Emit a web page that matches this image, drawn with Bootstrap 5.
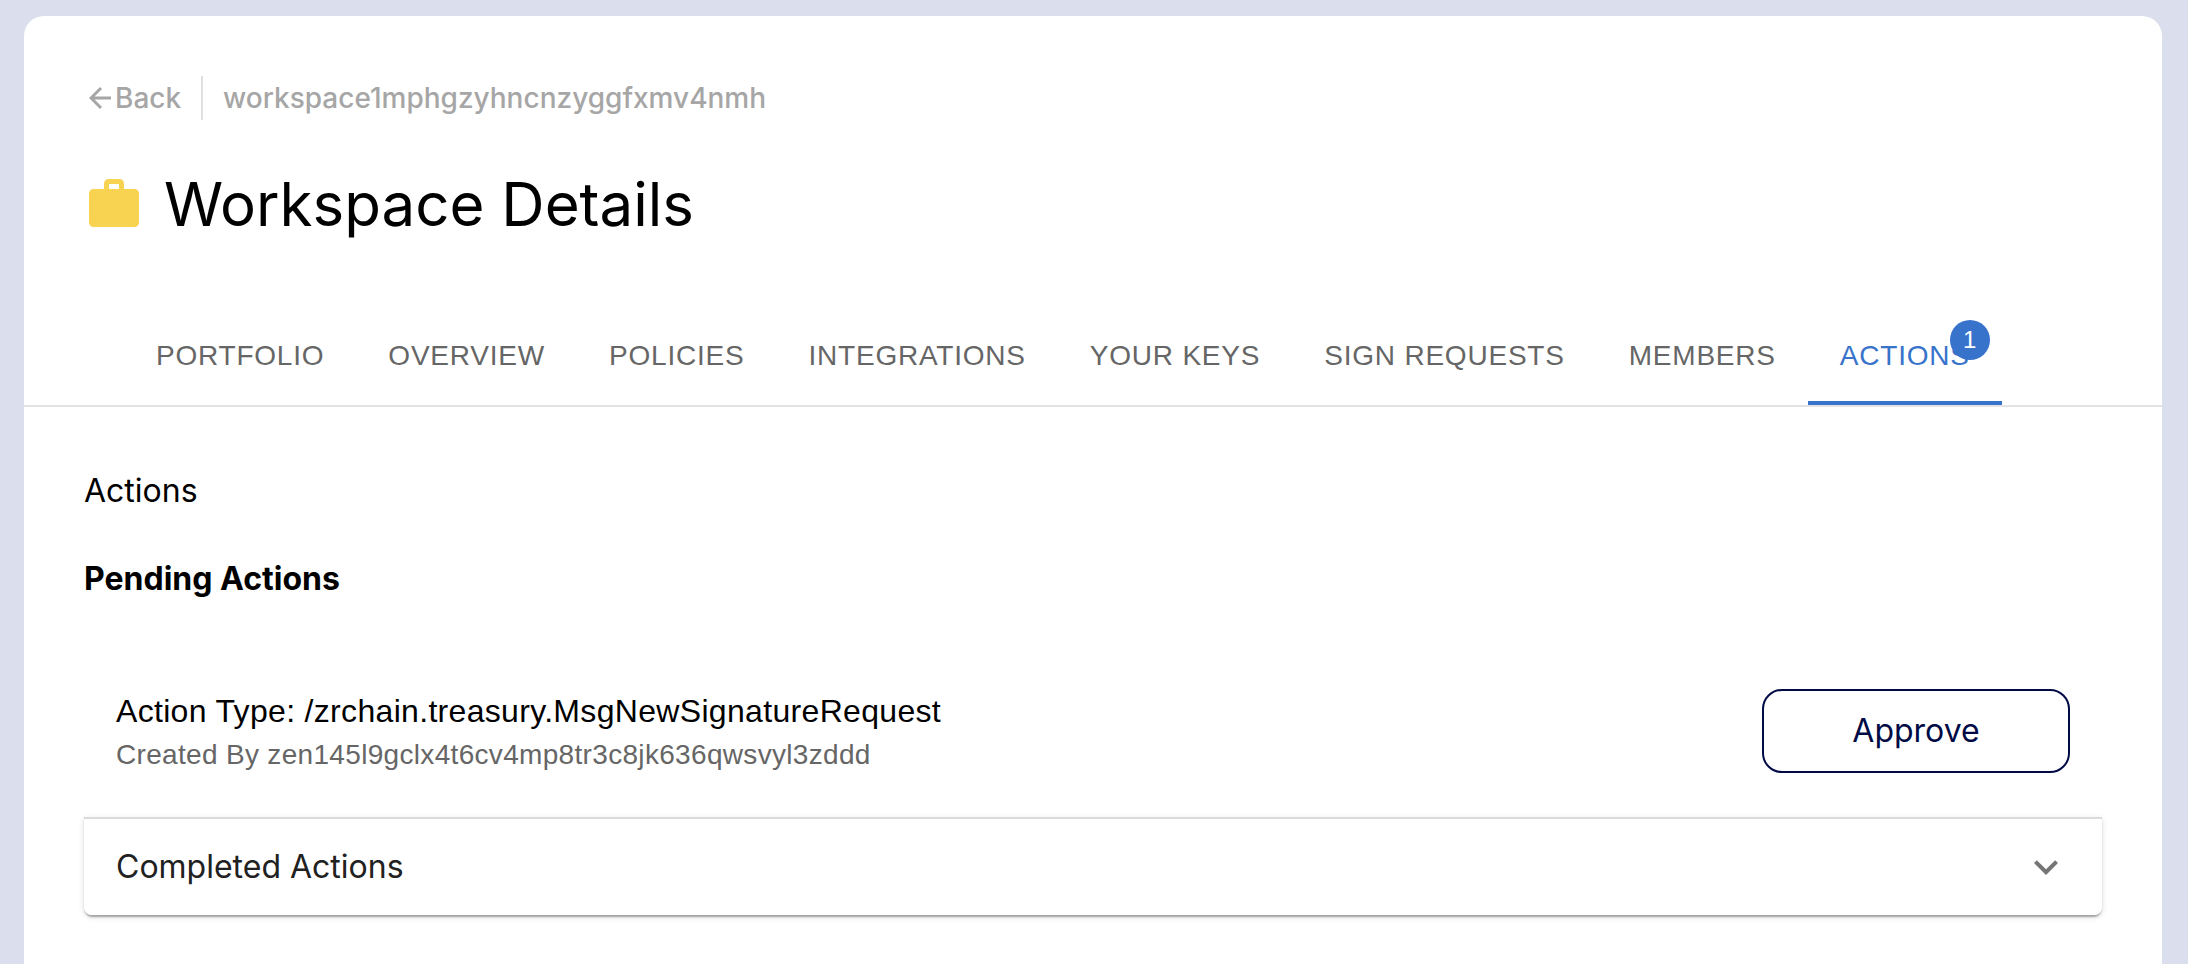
<!DOCTYPE html>
<html lang="en">
<head>
<meta charset="utf-8">
<meta name="viewport" content="width=device-width, initial-scale=1">
<title>Workspace Details</title>
<link href="https://cdn.jsdelivr.net/npm/bootstrap@5.3.0/dist/css/bootstrap.min.css" rel="stylesheet">
<style>
  body { background: #dbdeec; color: #000; font-family: Inter, "Liberation Sans", sans-serif; font-size: 32px; line-height: 48px; }
  .panel { background: #fff; border-radius: 20px 20px 0 0; margin: 16px 26px 0 24px; }
  .page-head { padding: 60px 65px 0; }
  .crumbs { font-size: 28px; line-height: 44px; font-weight: 500; color: #a6a6a6; }
  .crumbs a { color: inherit; }
  .crumbs .crumb-id { border-left: 2px solid #e0e0e0; margin-left: 20px; padding-left: 20px; }
  .page-title { font-size: 60px; line-height: 72px; font-weight: 400; margin: 48px 0 0; gap: 25px; }
  .tabs { padding: 0 100px; margin-top: 68px; border-bottom: 2px solid #e3e3e3; font-family: "Liberation Sans", sans-serif; font-size: 28px; line-height: 32px; }
  .tabs .nav-link { color: #666; padding: 32px 32px 29px; border-bottom: 4px solid transparent; border-radius: 0; letter-spacing: .028em; text-transform: uppercase; }
  .tabs .nav-link.active { color: #3873cb; border-color: #3873cb; }
  .tab-count { position: absolute; top: 12px; right: 12px; width: 40px; height: 40px; background: #3873cb; color: #fff; font-size: 24px; line-height: 40px; letter-spacing: 0; }
  .content { padding: 60px 60px 48px; }
  .content h2, .content h3 { font-size: 32px; line-height: 48px; margin: 0; font-weight: 400; }
  .content h3 { font-weight: 700; margin-top: 40px; }
  .action { padding: 84px 32px 42px; font-family: "Liberation Sans", sans-serif; letter-spacing: .01em; }
  .action-type { line-height: 48px; }
  .action-by { font-size: 28px; line-height: 40px; color: #666; }
  .btn-approve { width: 308px; height: 84px; border: 2px solid #000b45; border-radius: 20px; color: #000b45; font-family: Inter, sans-serif; font-size: 32px; }
  .completed { border-top: 2px solid #dadada; border-radius: 0 0 8px 8px; box-shadow: 0 4px 2px -2px rgba(0,0,0,.2), 0 2px 2px rgba(0,0,0,.14), 0 2px 6px rgba(0,0,0,.12); }
  .completed-toggle { font-size: 32px; line-height: 48px; padding: 24px 32px; color: #212121; background: #fff; border-radius: 0 0 8px 8px; }
</style>
</head>
<body class="d-flex flex-column min-vh-100">
<main class="panel flex-grow-1">
  <header class="page-head">
    <nav class="crumbs d-flex align-items-center" aria-label="Breadcrumb">
      <a href="#" class="d-flex align-items-center text-decoration-none">
        <svg width="26" height="28" viewBox="0 0 26 28" fill="none" stroke="currentColor" stroke-width="3" aria-hidden="true"><path d="M22 14H2M12 4L2 14l10 10"/></svg>Back</a>
      <span class="crumb-id">workspace1mphgzyhncnzyggfxmv4nmh</span>
    </nav>
    <h1 class="page-title d-flex align-items-center">
      <svg width="50" height="50" viewBox="0 0 50 50" fill="#f8d251" aria-hidden="true"><path fill-rule="evenodd" d="M15 10V5q0-5 5-5h10q5 0 5 5v5h10q5 0 5 5v28q0 5-5 5H5q-5 0-5-5V15q0-5 5-5zM20 5v5h10V5z"/></svg>
      Workspace Details
    </h1>
  </header>
  <nav class="tabs nav flex-nowrap" aria-label="Workspace sections">
    <a class="nav-link" href="#">Portfolio</a>
    <a class="nav-link" href="#">Overview</a>
    <a class="nav-link" href="#">Policies</a>
    <a class="nav-link" href="#">Integrations</a>
    <a class="nav-link text-nowrap" href="#">Your keys</a>
    <a class="nav-link text-nowrap" href="#">Sign requests</a>
    <a class="nav-link" href="#">Members</a>
    <a class="nav-link active position-relative" aria-current="page" href="#">Actions<span class="tab-count rounded-circle text-center">1</span></a>
  </nav>
  <section class="content">
    <h2>Actions</h2>
    <h3>Pending Actions</h3>
    <div class="action d-flex justify-content-between align-items-center">
      <div>
        <div class="action-type">Action Type: /zrchain.treasury.MsgNewSignatureRequest</div>
        <div class="action-by">Created By zen145l9gclx4t6cv4mp8tr3c8jk636qwsvyl3zddd</div>
      </div>
      <button type="button" class="btn btn-approve">Approve</button>
    </div>
    <div class="completed">
      <button type="button" class="completed-toggle btn w-100 border-0 d-flex justify-content-between align-items-center">
        Completed Actions
        <svg width="48" height="48" viewBox="0 0 24 24" fill="#757575" aria-hidden="true"><path d="M16.59 8.59 12 13.17 7.41 8.59 6 10l6 6 6-6z"/></svg>
      </button>
    </div>
  </section>
</main>
<script src="https://cdn.jsdelivr.net/npm/bootstrap@5.3.0/dist/js/bootstrap.bundle.min.js"></script>
</body>
</html>
